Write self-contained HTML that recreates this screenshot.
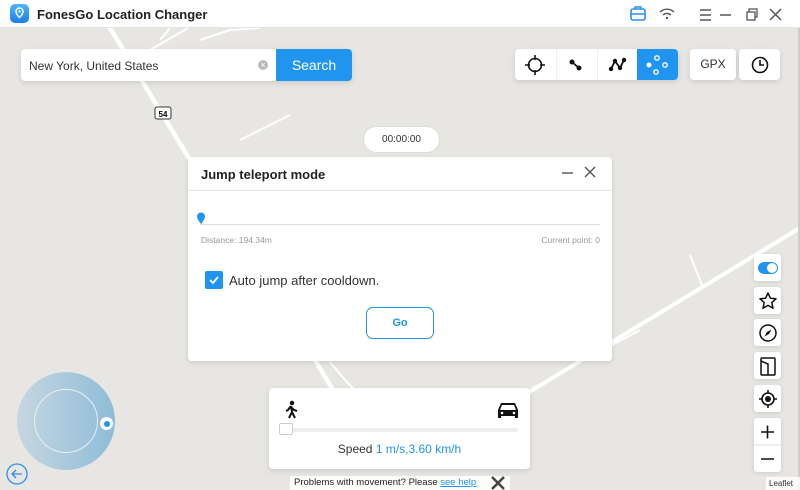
<!DOCTYPE html>
<html><head><meta charset="utf-8"><style>
*{box-sizing:border-box;margin:0;padding:0}
body{width:800px;height:490px;overflow:hidden;background:#e8e6e2;font-family:"Liberation Sans",sans-serif;position:relative}
.abs{position:absolute}
.card{background:#fff;border-radius:4px;box-shadow:0 2px 6px rgba(0,0,0,.12)}
.rb{position:absolute;left:754px;width:27px;height:27px;background:#fff;border-radius:3px;box-shadow:0 1px 4px rgba(0,0,0,.12);display:flex;align-items:center;justify-content:center}
</style></head><body>
<svg class="abs" style="left:0;top:0" width="800" height="490">
<g stroke="#fff" stroke-width="4.5" fill="none" stroke-linecap="round">
<path d="M110 28 L190 160"/>
<path d="M315 360 L345 410 L365 430"/>
<path d="M450 440 L800 228" stroke-width="4"/>
</g>
<g stroke="#fff" stroke-width="2" fill="none">
<path d="M170 28 L160 40"/>
<path d="M188 28 L150 50"/>
<path d="M200 40 L230 30 L260 28"/>
<path d="M240 140 L290 115"/>
<path d="M690 255 L702 285"/>
<path d="M612 345 L640 330"/>
<path d="M330 362 L345 380 L360 395"/>
</g>
<rect x="155" y="107" width="16" height="12" rx="2" fill="#fff" stroke="#333"/>
<text x="163" y="117" font-size="8" text-anchor="middle" font-family="Liberation Sans" font-weight="bold">54</text>
<rect x="798" y="0" width="2" height="490" fill="#ccc"/>
</svg>
<!-- title bar -->
<div class="abs" style="left:0;top:0;width:800px;height:28px;background:#fff;border-bottom:1px solid #e4e4e4"></div>
<div class="abs" style="left:10px;top:4px;width:19px;height:19px;border-radius:5px;background:linear-gradient(#4fb3ff,#1a7fe8)"><svg width="19" height="19"><path d="M9.5 4a3.5 3.5 0 0 1 3.5 3.5c0 2.5-3.5 6-3.5 6s-3.5-3.5-3.5-6A3.5 3.5 0 0 1 9.5 4z" fill="none" stroke="#fff" stroke-width="1.5"/><circle cx="9.5" cy="7.5" r="1.2" fill="#fff"/></svg></div>
<div class="abs" style="left:37px;top:7px;font-size:13px;font-weight:bold;color:#222">FonesGo Location Changer</div>
<svg class="abs" style="left:628px;top:5px" width="172" height="20">
<rect x="3" y="4" width="14" height="11" rx="2" fill="none" stroke="#2a8ef0" stroke-width="1.6"/><path d="M7 4V2h6v2M3 9h14" stroke="#2a8ef0" stroke-width="1.4" fill="none"/>
<g stroke="#555" stroke-width="1.4" fill="none"><path d="M32 7a10 10 0 0 1 14 0M35 10a6 6 0 0 1 8 0"/></g><circle cx="39" cy="13" r="1.2" fill="#555"/>
<g stroke="#555" stroke-width="1.5"><path d="M72 5h11M72 10h11M72 15h11"/><path d="M92 10h11"/></g>
<rect x="119" y="7" width="8" height="8" fill="#fff" stroke="#555" stroke-width="1.3"/><path d="M121 7V4h8v8h-2" fill="none" stroke="#555" stroke-width="1.3"/>
<path d="M142 4l11 11M153 4l-11 11" stroke="#555" stroke-width="1.5"/>
</svg>
<!-- search -->
<div class="abs card" style="left:21px;top:49px;width:331px;height:32px;overflow:hidden">
<div class="abs" style="left:8px;top:10px;font-size:12px;color:#333">New York, United States</div>
<div class="abs" style="left:237px;top:11px;width:10px;height:10px;border-radius:50%;background:#bbb;color:#fff;font-size:9px;line-height:10px;text-align:center">×</div>
<div class="abs" style="left:255px;top:0;width:76px;height:32px;background:#1f95f0;color:#fff;font-size:14px;text-align:center;line-height:32px">Search</div>
</div>
<!-- modes -->
<div class="abs card" style="left:515px;top:49px;width:163px;height:31px;overflow:hidden">
<div class="abs" style="left:41px;top:0;width:1px;height:31px;background:#eee"></div>
<div class="abs" style="left:82px;top:0;width:1px;height:31px;background:#eee"></div>
<div class="abs" style="left:122px;top:0;width:41px;height:31px;background:#1f95f0"></div>
<svg class="abs" style="left:0;top:0" width="163" height="31">
<circle cx="20" cy="16" r="6.5" fill="none" stroke="#111" stroke-width="1.6"/><path d="M20 6v5M20 21v5M10 16h5M25 16h5" stroke="#111" stroke-width="1.6"/>
<circle cx="57" cy="13" r="2.5" fill="#111"/><circle cx="64" cy="19" r="2.5" fill="#111"/><path d="M57 13L64 19" stroke="#111" stroke-width="1.8"/>
<path d="M96 20L100 12L105 19L109 11" stroke="#111" stroke-width="1.8" fill="none"/><circle cx="96" cy="20" r="2.2" fill="#111"/><circle cx="100" cy="12" r="2.2" fill="#111"/><circle cx="105" cy="19" r="2.2" fill="#111"/><circle cx="109" cy="11" r="2.2" fill="#111"/>
<g fill="none" stroke="#fff" stroke-width="1.4"><circle cx="142" cy="9" r="2.2"/><circle cx="150" cy="16" r="2.2"/><circle cx="141" cy="23" r="2.2"/></g><circle cx="134" cy="16" r="2.5" fill="#fff"/>
</svg>
</div>
<div class="abs card" style="left:690px;top:49px;width:46px;height:31px;font-size:12px;text-align:center;line-height:31px;color:#333">GPX</div>
<div class="abs card" style="left:739px;top:49px;width:41px;height:31px"><svg width="41" height="31"><circle cx="21" cy="16" r="7.5" fill="none" stroke="#111" stroke-width="1.6"/><path d="M21 11v5h4" fill="none" stroke="#111" stroke-width="1.6"/></svg></div>
<!-- timer -->
<div class="abs" style="left:363px;top:126px;width:77px;height:27px;background:#fff;border-radius:14px;border:1px solid #ddd;font-size:10px;text-align:center;line-height:25px;color:#333">00:00:00</div>
<!-- dialog -->
<div class="abs card" style="left:188px;top:157px;width:424px;height:204px">
<div class="abs" style="left:13px;top:10px;font-size:13px;font-weight:bold;color:#222">Jump teleport mode</div>
<svg class="abs" style="left:370px;top:6px" width="45" height="20"><path d="M4 10h11" stroke="#555" stroke-width="1.4"/><path d="M27 4l10 10M37 4l-10 10" stroke="#555" stroke-width="1.4"/></svg>
<div class="abs" style="left:0;top:33px;width:424px;height:1px;background:#e8e8e8"></div>
<div class="abs" style="left:12px;top:67px;width:400px;height:1px;background:#ddd"></div>
<svg class="abs" style="left:8px;top:55px" width="10" height="13"><path d="M5 12C2 8 1 6 1 4.5a4 4 0 0 1 8 0C9 6 8 8 5 12z" fill="#1f95f0"/></svg>
<div class="abs" style="left:13px;top:78px;font-size:8.5px;color:#999">Distance: 194.34m</div>
<div class="abs" style="right:12px;top:78px;font-size:8.5px;color:#999">Current point: 0</div>
<div class="abs" style="left:17px;top:114px;width:18px;height:18px;background:#1f95f0;border-radius:2px"><svg width="18" height="18"><path d="M5 9l3 3 5-6" stroke="#fff" stroke-width="1.8" fill="none"/></svg></div>
<div class="abs" style="left:41px;top:116px;font-size:13px;color:#333">Auto jump after cooldown.</div>
<div class="abs" style="left:178px;top:150px;width:68px;height:32px;border:1px solid #1f95f0;border-radius:7px;color:#1f95f0;font-weight:bold;font-size:11px;text-align:center;line-height:30px">Go</div>
</div>
<!-- right buttons -->
<div class="rb" style="top:254px"><div style="width:20px;height:12px;border-radius:6px;background:#1f95f0;position:relative"><div style="position:absolute;right:1px;top:1px;width:10px;height:10px;border-radius:50%;background:#fff"></div></div></div>
<div class="rb" style="top:287px"><svg width="20" height="20"><path d="M10 2l2.4 5.2 5.6.6-4.2 3.8 1.2 5.6L10 14.4 5 17.2l1.2-5.6L2 7.8l5.6-.6z" fill="none" stroke="#111" stroke-width="1.5" stroke-linejoin="round"/></svg></div>
<div class="rb" style="top:319px"><svg width="20" height="20"><circle cx="10" cy="10" r="8" fill="none" stroke="#111" stroke-width="1.5"/><path d="M13.5 6.5L11 11 6.5 13.5 9 9z" fill="#111"/></svg></div>
<div class="rb" style="top:352px"><svg width="20" height="20"><rect x="3" y="2" width="14" height="17" rx="1" fill="none" stroke="#111" stroke-width="1.5"/><path d="M10 19V8L3 5" fill="none" stroke="#111" stroke-width="1.5"/></svg></div>
<div class="rb" style="top:385px"><svg width="20" height="20"><circle cx="10" cy="10" r="6" fill="none" stroke="#111" stroke-width="1.6"/><circle cx="10" cy="10" r="3" fill="#111"/><path d="M10 1v3M10 16v3M1 10h3M16 10h3" stroke="#111" stroke-width="1.6"/></svg></div>
<div class="rb" style="top:418px;height:54px;display:block"><svg width="27" height="54"><path d="M7 14h13M13.5 7.5v13M7 41h13" stroke="#111" stroke-width="1.6"/><path d="M0 27h27" stroke="#ddd"/></svg></div>
<div class="abs" style="left:766px;top:477px;width:34px;height:13px;background:rgba(255,255,255,.8);font-size:8px;color:#333;padding:2px 3px">Leaflet</div>
<!-- joystick -->
<div class="abs" style="left:17px;top:372px;width:98px;height:98px;border-radius:50%;background:linear-gradient(90deg,#c6d6e0,#8ebcd8)"></div>
<div class="abs" style="left:34px;top:389px;width:64px;height:64px;border-radius:50%;border:1.5px solid #e8f0f5"></div>
<div class="abs" style="left:100px;top:417px;width:13px;height:13px;border-radius:50%;background:#fff"><div style="margin:3.5px;width:6px;height:6px;border-radius:50%;background:#1f95f0"></div></div>
<svg class="abs" style="left:6px;top:463px" width="22" height="22"><circle cx="11" cy="11" r="10" fill="none" stroke="#2a8ef0" stroke-width="1.3"/><path d="M16 11H6M10 7l-4 4 4 4" fill="none" stroke="#2a8ef0" stroke-width="1.3"/></svg>
<!-- speed -->
<div class="abs card" style="left:269px;top:388px;width:261px;height:81px">
<svg class="abs" style="left:14px;top:12px" width="18" height="20"><circle cx="9" cy="3" r="2.2" fill="#111"/><path d="M8 6L5 10l-2 1M8 6l1 6-3 6M9 12l3 6M8 7l3 3 3 1" stroke="#111" stroke-width="2" fill="none"/></svg>
<svg class="abs" style="left:227px;top:12px" width="24" height="20"><path d="M5 3h14l3 7v8h-3v-2H5v2H2v-8z" fill="#111"/><path d="M6 5h12l2 5H4z" fill="#fff"/><circle cx="6" cy="13" r="1.3" fill="#fff"/><circle cx="18" cy="13" r="1.3" fill="#fff"/></svg>
<div class="abs" style="left:12px;top:40px;width:237px;height:4px;background:#eee;border-radius:2px"></div>
<div class="abs" style="left:10px;top:35px;width:14px;height:12px;background:#fff;border:1px solid #ccc;border-radius:2px"></div>
<div class="abs" style="left:0;top:54px;width:261px;text-align:center;font-size:12px;color:#333">Speed <span style="color:#1f95f0">1 m/s,3.60 km/h</span></div>
</div>
<div class="abs" style="left:290px;top:476px;width:220px;height:14px;background:rgba(255,255,255,.85);font-size:9.5px;color:#222;padding:1px 4px">Problems with movement? Please <span style="color:#1f95f0;text-decoration:underline">see help</span></div>
<svg class="abs" style="left:489px;top:476px" width="18" height="14"><path d="M3 1l12 12M15 1L3 13" stroke="#444" stroke-width="2.5"/></svg>
</body></html>
